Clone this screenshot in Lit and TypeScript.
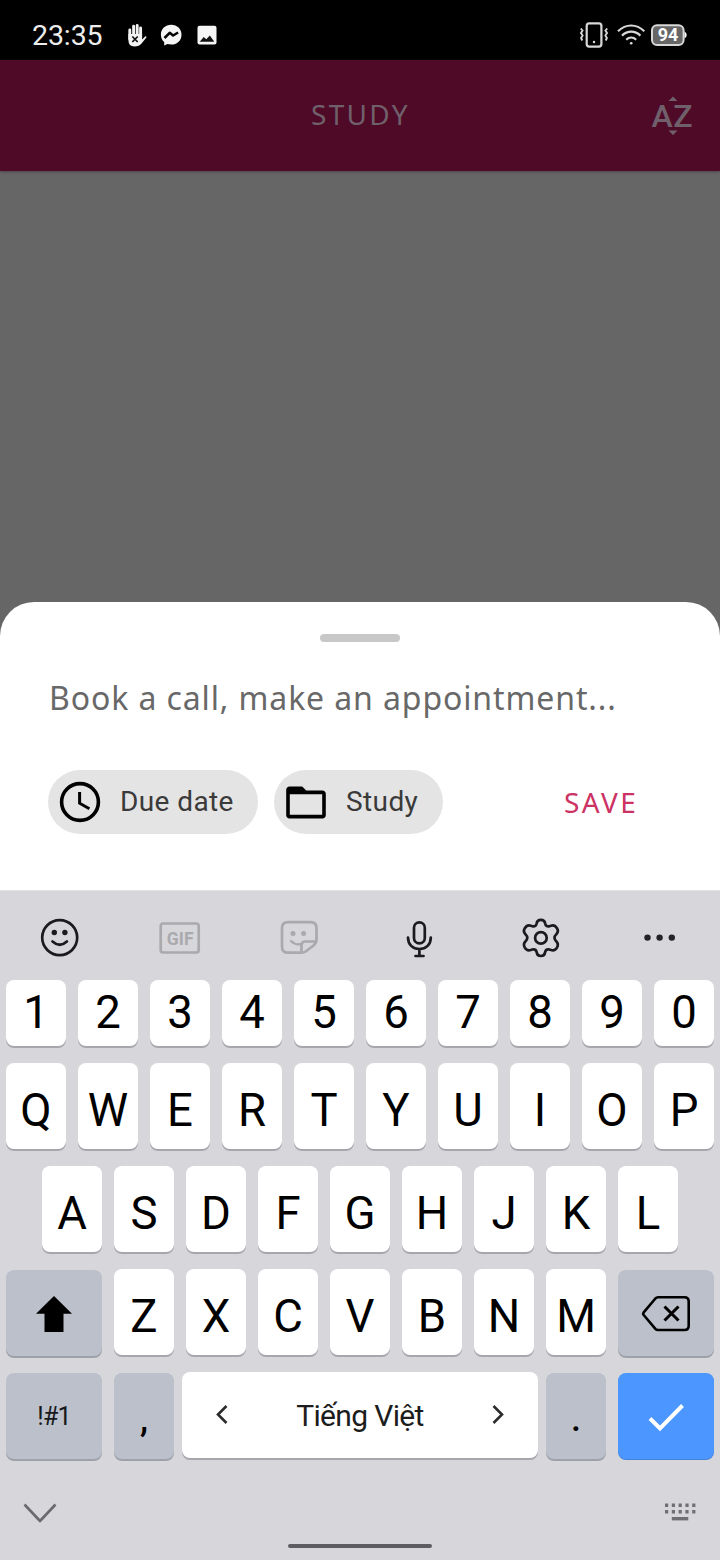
import { LitElement, html, css, svg } from "lit";
import { customElement, property } from "lit/decorators.js";
import { classMap } from "lit/directives/class-map.js";

@customElement("status-bar")
class StatusBar extends LitElement {
  static styles = css`
    :host { display: flex; align-items: center; height: 60px; background: #000; color: #ececec;
      padding: 0 33px 0 32px; box-sizing: border-box; justify-content: space-between; }
    .group { display: flex; align-items: center; }
    .time { font: 400 28.5px/34px Roboto, sans-serif; width: 94px; padding-top: 12px; letter-spacing: -0.1px; }
    svg { display: block; }
    .batt { font: 700 18px Roboto, sans-serif; }
  `;
  render() {
    return html`
      <div class="group">
        <span class="time">23:35</span>
        <svg width="94" height="60" viewBox="126 0 94 60">
          <g stroke="#f2f2f2" stroke-linecap="round" stroke-width="3" fill="none">
            <path d="M129.800 30v9M133.600 26.300v12M137.200 25.500v12M140.600 28v10" stroke-width="2.900"/>
          </g>
          <path d="M128.400 34h13.700v5.500l3-3q1.500-.8 1.300.9l-4.800 6q-2.400 3-7.200 3-6 0-6-6.500z" fill="#f2f2f2"/>
          <path d="M132.300 36.500l5.400 5.500M137.700 36.500l-5.400 5.500" stroke="#111" stroke-width="1.700"/>
          <path d="M171.200 24.800c-6 0-10.300 4.200-10.300 9.900 0 3.200 1.400 5.700 3.300 7.300v3.600l3.300-1.500c1.100.3 2.400.5 3.700.5 6 0 10.300-4.200 10.300-9.900s-4.300-9.900-10.300-9.900z" fill="#f5f5f5"/>
          <path d="M164.500 38l5.200-5.200 3.400 2.700 5-3" fill="none" stroke="#000" stroke-width="2.500" stroke-linejoin="round"/>
          <rect x="197.500" y="25.800" width="19" height="18.600" rx="2" fill="#f5f5f5"/>
          <path d="M199.700 41.700l4-4.700 2.600 2.300 3.500-3.900 4.500 6.300z" fill="#111"/>
        </svg>
      </div>
      <svg width="108" height="60" viewBox="579 0 108 60">
        <g fill="none" stroke="#d8d8d8">
          <rect x="586.700" y="23.400" width="14.700" height="23.200" rx="2.500" stroke-width="2.200"/>
          <path d="M580.800 28.500l1.700 2-1.500 2.500 1.600 2.500-1.500 2.500 1.200 2.500M607.200 28.500l-1.700 2 1.500 2.500-1.600 2.500 1.500 2.500-1.200 2.500" stroke-width="1.900"/>
          <path d="M618 31.200c8-7.600 18.300-7.600 26.300 0M622 35.600c5.600-5.200 12.800-5.200 18.400 0M626.200 39.700c3-2.700 7-2.700 10 0" stroke-width="2.200"/>
        </g>
        <circle cx="594" cy="42" r="1.200" fill="#ddd"/><circle cx="631.200" cy="43.300" r="1.300" fill="#ddd"/>
        <rect x="652" y="25.200" width="31.600" height="19.700" rx="5" fill="#666" stroke="#d8d8d8" stroke-width="2"/>
        <path d="M684.500 31.500q2.200 1 2.200 3.500t-2.200 3.500z" fill="#fff"/>
        <text class="batt" x="668" y="41.300" text-anchor="middle" fill="#fff">94</text>
      </svg>`;
  }
}

@customElement("app-header")
class AppHeader extends LitElement {
  static styles = css`
    :host { display: grid; grid-template-columns: 80px 1fr 80px; align-items: center; height: 111px;
      background: #4f0a28; color: #70606b; box-shadow: 0 1px 2px #4b4148; z-index: 1; }
    .title { grid-column: 2; text-align: center; font: 400 28px/40px "Noto Sans", sans-serif; letter-spacing: 2.3px; padding: 0 0 3px 1px; }
    .sort { font: 500 32px Roboto, sans-serif; }
    svg { display: block; }
  `;
  render() {
    return html`
      <div class="title">STUDY</div>
      <svg width="80" height="111" viewBox="640 60 80 111" fill="#70606b">
        <text class="sort" x="651.500" y="127.200">A</text>
        <text class="sort" x="673.200" y="127.200">Z</text>
        <path d="M668.500 101l4.500-4.500 4.500 4.500zM668.500 130.500l4.500 4.500 4.500-4.500z"/>
      </svg>`;
  }
}

@customElement("task-sheet")
class TaskSheet extends LitElement {
  static styles = css`
    :host { display: flex; flex-direction: column; height: 288px; background: #fff;
      border-radius: 34px 34px 0 0; box-sizing: border-box; padding: 32px 48px 0; }
    .handle { width: 80px; height: 8px; border-radius: 4px; background: #c8c8c8; align-self: center; }
    .field { margin-top: 34px; padding-left: 1px; font: 400 32px/44px "Noto Sans", sans-serif; color: #686868;
      letter-spacing: .89px; white-space: nowrap; }
    .actions { margin-top: 50px; display: flex; align-items: center; gap: 16px; }
    .chip { display: flex; align-items: center; height: 64px; border-radius: 32px; background: #e4e4e4; flex: none;
      box-sizing: border-box; padding: 0 0 0 8px; gap: 16px; font: 400 28px/60px Roboto, sans-serif; color: #3a3a3a;
      letter-spacing: .4px; white-space: nowrap; }
    .chip svg { display: block; flex: none; }
    .due { width: 210px; } .folder { width: 169px; }
    .save { margin-left: 105px; font: 400 28px/64px "Noto Sans", sans-serif; letter-spacing: 2.4px; color: #cc3364; }
  `;
  render() {
    return html`
      <div class="handle"></div>
      <div class="field">Book a call, make an appointment...</div>
      <div class="actions">
        <div class="chip due">
          <svg width="48" height="48" viewBox="0 0 24 24" fill="none" stroke="#000" stroke-width="1.800">
            <circle cx="12" cy="12" r="9.200"/><path d="M11.800 7v5.600l4.900 2.800" stroke-width="1.500"/>
          </svg>Due date</div>
        <div class="chip folder">
          <svg width="48" height="48" viewBox="0 0 24 24">
            <path d="M3.800 4.200h6.300l2 2h8.100c1 0 1.700.7 1.700 1.700v10.700c0 1-.7 1.600-1.700 1.600H3.800c-1 0-1.700-.6-1.700-1.600V5.800c0-.9.700-1.600 1.700-1.600zM3.900 8.100v10.300h16.200V8.100z" fill="#000" fill-rule="evenodd"/>
          </svg>Study</div>
        <span class="save">SAVE</span>
      </div>`;
  }
}

type Kind = "plain" | "soft" | "accent";

@customElement("key-cap")
class KeyCap extends LitElement {
  @property() label = "";
  @property() kind: Kind = "plain";
  @property() variant = "";
  static styles = css`
    :host { display: block; }
    .cap { height: 86px; box-sizing: border-box; border-radius: 8px; background: #fff; color: #000;
      box-shadow: 0 2px 0 #a6a7ad; display: flex; justify-content: center; align-items: center;
      font: 400 45.500px/1 Roboto, sans-serif; padding-top: 9px; }
    .digit { height: 66px; padding-top: 0; }
    .soft { background: #bbc0ca; box-shadow: 0 2px 0 #9da1a9; transform: translateY(1px); }
    .accent { background: #4b96ff; box-shadow: 0 1px 0 #4583d8; transform: translateY(1px); }
    .icon, .mode, .space { padding-top: 0; }
    .mode { font-size: 25px; letter-spacing: -.8px; color: #16181c; }
    .comma { padding-top: 5px; font-weight: 500; font-size: 36px; }
    .space { justify-content: space-between; padding: 2px 32px 0; font-size: 30px; letter-spacing: -.65px; color: #1c1c1c; }
    ::slotted(svg) { display: block; }
  `;
  render() {
    return html`<div class=${classMap({ cap: true, [this.kind]: true, [this.variant || "letter"]: true })}>${this.label}<slot></slot></div>`;
  }
}

@customElement("soft-keyboard")
class SoftKeyboard extends LitElement {
  static styles = css`
    :host { display: flex; flex-direction: column; height: 670px; background: #d7d7db; box-sizing: border-box; border-top: 1px solid #e2e2e6; }
    .tools { display: grid; grid-template-columns: repeat(6, 120px); height: 89px; }
    .tools svg { display: block; }
    .rows { display: flex; flex-direction: column; gap: 17px; }
    .row { display: flex; justify-content: center; gap: 12px; }
    .key { width: 60px; } .wide { width: 96px; } .bar { width: 356px; margin: 0 -4px; }
    .gif { font: 700 17.500px Roboto, sans-serif; }
    .nav { display: grid; grid-template-columns: 288px 144px 288px; flex: 1; }
    .nav svg { display: block; }
    .home { width: 144px; height: 4px; border-radius: 2px; background: #5e5e62; align-self: end; margin-bottom: 12px; }
  `;
  private keys(chars: string, variant = "") {
    return [...chars].map((c) => html`<key-cap class="key" label=${c} variant=${variant}></key-cap>`);
  }
  private tool(x: number, body: unknown) {
    return html`<svg width="120" height="89" viewBox="${x} 891 120 89" fill="none" stroke="#1b1b1d" stroke-width="2.700" stroke-linecap="round" stroke-linejoin="round">${body}</svg>`;
  }
  render() {
    const gear = "M536.700 923.300Q537.200 919.800 540.900 919.800Q544.600 919.800 545.100 923.300Q545.800 927 549.400 926.200L551 925.700Q554.600 924.500 557 928.200Q559 931.800 556.200 934.400Q552.800 937.800 556.200 941.200Q559 944 557 947.600Q554.800 951.300 551 950L549.400 949.500Q545.900 948.600 545.100 952.300Q544.600 956 540.900 956Q537.200 956 536.700 952.300Q535.900 948.600 532.400 949.500L530.800 950Q527 951.300 524.800 947.600Q522.800 944 525.600 941.200Q529 937.800 525.600 934.400Q522.800 931.800 524.800 928.200Q527.200 924.500 530.800 925.700L532.400 926.200Q536 927 536.700 923.300Z";
    return html`
      <div class="tools">
        ${this.tool(0, svg`<circle cx="59.700" cy="937.600" r="17.500"/><path d="M52.500 941.500q7.200 6.500 14.400 0"/><g fill="#1b1b1d" stroke="none"><circle cx="54.300" cy="932.500" r="2.700"/><circle cx="64.900" cy="932.500" r="2.700"/></g>`)}
        ${this.tool(120, svg`<rect x="160.700" y="923.500" width="38" height="29" rx="2.500" stroke="#aaaaae"/><text class="gif" x="180.200" y="945" text-anchor="middle" fill="#aaaaae" stroke="none">GIF</text>`)}
        ${this.tool(240, svg`<g stroke="#aaaaae"><path d="M301.500 952.700H288q-6 0-6-6v-18.500q0-6 6-6h22.500q6 0 6 6V939.500Q316.500 943 313.500 945.500L306 951.200Q304 952.700 301.500 952.700V945.500Q301.500 941.500 305.500 941.500H315.500"/><path d="M291 941q4.500 4.500 10.500 3" stroke-width="2.400"/></g><g fill="#aaaaae" stroke="none"><circle cx="293" cy="933.500" r="2.500"/><circle cx="303.600" cy="933.500" r="2.500"/></g>`)}
        ${this.tool(360, svg`<rect x="414" y="922.300" width="10.800" height="21" rx="5.400"/><path d="M408 937.500c0 7 4.700 11.500 11.400 11.500s11.400-4.500 11.400-11.500M419.400 949v7M415.500 956h8"/>`)}
        ${this.tool(480, svg`<path d=${gear}/><circle cx="540.900" cy="937.900" r="5.800"/>`)}
        ${this.tool(600, svg`<g fill="#242427" stroke="none"><circle cx="647.500" cy="937.600" r="3.200"/><circle cx="659.600" cy="937.600" r="3.200"/><circle cx="671.800" cy="937.600" r="3.200"/></g>`)}
      </div>
      <div class="rows">
        <div class="row">${this.keys("1234567890", "digit")}</div>
        <div class="row">${this.keys("QWERTYUIOP")}</div>
        <div class="row">${this.keys("ASDFGHJKL")}</div>
        <div class="row">
          <key-cap class="wide" kind="soft" variant="icon"><svg width="96" height="86" viewBox="6 1270 96 86"><path d="M54 1296l18 17.700h-8.500v18.300h-19v-18.300h-8.500z" fill="#000"/></svg></key-cap>
          ${this.keys("ZXCVBNM")}
          <key-cap class="wide" kind="soft" variant="icon"><svg width="96" height="86" viewBox="618 1270 96 86" fill="none" stroke="#000" stroke-width="2.600" stroke-linejoin="round"><path d="M658 1297.300h26.500q4.200 0 4.200 4.200v24.300q0 4.200-4.200 4.200H658q-1.500 0-2.600-1.200L643.700 1315q-1-1.300 0-2.600l11.700-13.900q1.100-1.200 2.600-1.200z"/><path d="M664.500 1306.500l14 14M678.500 1306.500l-14 14" stroke-width="3"/></svg></key-cap>
        </div>
        <div class="row">
          <key-cap class="wide" kind="soft" variant="mode" label="!#1"></key-cap>
          <key-cap class="key" kind="soft" variant="comma" label=","></key-cap>
          <key-cap class="bar" variant="space">
            <svg width="16" height="24" viewBox="0 0 16 24" fill="none" stroke="#2b2b2b" stroke-width="2.600"><path d="M12.500 2L4 10.500l8.500 8.500"/></svg>
            <span>Tiếng Việt</span>
            <svg width="16" height="24" viewBox="0 0 16 24" fill="none" stroke="#2b2b2b" stroke-width="2.600"><path d="M3.500 2l8.500 8.500L3.500 19"/></svg>
          </key-cap>
          <key-cap class="key" kind="soft" variant="comma" label="."></key-cap>
          <key-cap class="wide" kind="accent" variant="icon"><svg width="96" height="86" viewBox="618 1373 96 86"><path d="M650 1418.500l10 10 22.500-23" fill="none" stroke="#fff" stroke-width="4"/></svg></key-cap>
        </div>
      </div>
      <div class="nav">
        <svg width="288" height="102" viewBox="0 1458 288 102" fill="none" stroke="#6a6a6e" stroke-width="2.600"><path d="M24.500 1504.500l15.500 16.500 15.500-16.500" stroke-linejoin="round"/></svg>
        <div class="home"></div>
        <svg width="288" height="102" viewBox="432 1458 288 102" fill="none" stroke="#707074" stroke-width="3.400"><path d="M665 1505.300h31M665 1511.800h31" stroke-dasharray="3.200 3.600"/><path d="M671.800 1518.700h16.500"/></svg>
      </div>`;
  }
}

@customElement("app-root")
class AppRoot extends LitElement {
  static styles = css`
    :host { display: flex; flex-direction: column; width: 720px; height: 1560px; overflow: hidden; background: #666; }
    .backdrop { flex: 1; }
  `;
  render() {
    return html`<status-bar></status-bar><app-header></app-header><div class="backdrop"></div><task-sheet></task-sheet><soft-keyboard></soft-keyboard>`;
  }
}
